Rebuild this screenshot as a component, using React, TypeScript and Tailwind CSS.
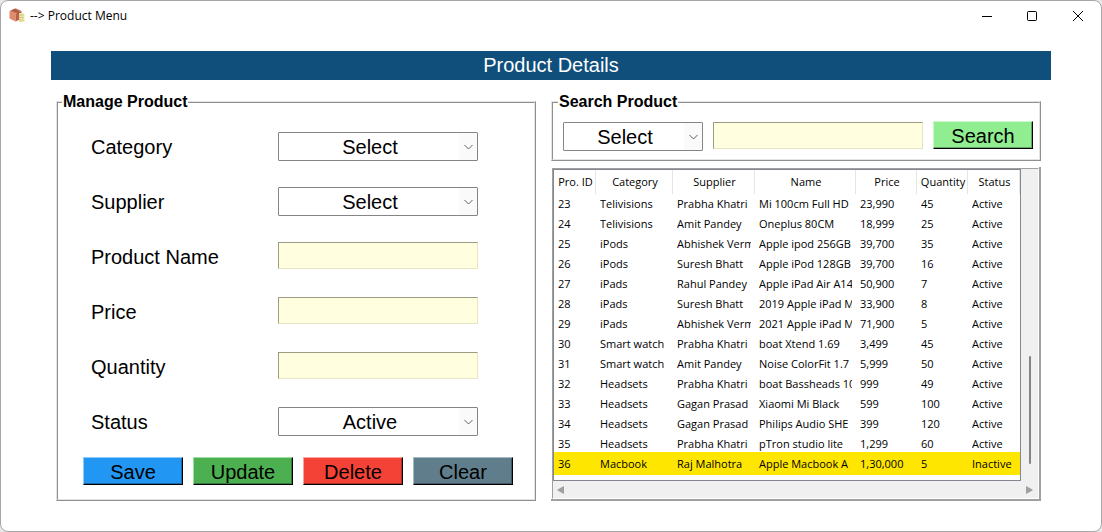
import React from "react";

const products: string[][] = [
  ["23", "Telivisions", "Prabha Khatri", "Mi 100cm Full HD", "23,990", "45", "Active"],
  ["24", "Telivisions", "Amit Pandey", "Oneplus 80CM", "18,999", "25", "Active"],
  ["25", "iPods", "Abhishek Verm", "Apple ipod 256GB", "39,700", "35", "Active"],
  ["26", "iPods", "Suresh Bhatt", "Apple iPod 128GB", "39,700", "16", "Active"],
  ["27", "iPads", "Rahul Pandey", "Apple iPad Air A14", "50,900", "7", "Active"],
  ["28", "iPads", "Suresh Bhatt", "2019 Apple iPad M", "33,900", "8", "Active"],
  ["29", "iPads", "Abhishek Verm", "2021 Apple iPad M", "71,900", "5", "Active"],
  ["30", "Smart watch", "Prabha Khatri", "boat Xtend 1.69", "3,499", "45", "Active"],
  ["31", "Smart watch", "Amit Pandey", "Noise ColorFit 1.7", "5,999", "50", "Active"],
  ["32", "Headsets", "Prabha Khatri", "boat Bassheads 10", "999", "49", "Active"],
  ["33", "Headsets", "Gagan Prasad", "Xiaomi Mi Black", "599", "100", "Active"],
  ["34", "Headsets", "Gagan Prasad", "Philips Audio SHE", "399", "120", "Active"],
  ["35", "Headsets", "Prabha Khatri", "pTron studio lite", "1,299", "60", "Active"],
  ["36", "Macbook", "Raj Malhotra", "Apple Macbook A", "1,30,000", "5", "Inactive"],
];

const columns = [
  { title: "Pro. ID", width: "w-[42px]" },
  { title: "Category", width: "w-[77px]" },
  { title: "Supplier", width: "w-[82px]" },
  { title: "Name", width: "w-[101px]" },
  { title: "Price", width: "w-[61px]" },
  { title: "Quantity", width: "w-[51px]" },
  { title: "Status", width: "w-[52px]" },
];

const selectedId = "36";

const panelClass =
  "min-w-0 border-2 border-[#e3e3e3] [border-style:ridge]";
const legendClass = "px-px text-base leading-5 font-bold";
const entryClass =
  "h-[27px] border border-t-[#9c9c84] border-l-[#9c9c84] border-r-[#e6e6c4] border-b-[#e6e6c4] bg-[#ffffe0] px-1 text-xl outline-none";
const buttonClass =
  "flex h-7 w-[100px] items-center justify-center border border-r-black border-b-black pt-0.5 text-xl leading-6";

function Combo({ id, label, options, className }: {
  id: string;
  label?: string;
  options: string[];
  className: string;
}) {
  return (
    <div className={`relative ${className}`}>
      <select
        id={id}
        aria-label={label}
        className="h-[29px] w-full appearance-none rounded-[1px] border border-[#858585] bg-white pr-4 text-center text-xl leading-6 outline-none"
      >
        {options.map((o) => (
          <option key={o}>{o}</option>
        ))}
      </select>
      <span className="pointer-events-none absolute inset-y-px right-px flex w-[18px] items-center justify-center bg-[#fafafa]">
        <svg width="10" height="6" viewBox="0 0 10 6" fill="none" stroke="#606060" aria-hidden="true">
          <path d="M1.500 1l4 4 4-4" />
        </svg>
      </span>
    </div>
  );
}

function FormRow({ id, label, children }: { id: string; label: string; children: React.ReactNode }) {
  return (
    <div className="flex h-[55px] items-start">
      <label htmlFor={id} className="w-[187px] pt-px text-xl leading-7">
        {label}
      </label>
      {children}
    </div>
  );
}

function BoxIcon() {
  return (
    <svg width="16" height="16" viewBox="0 0 16 16" aria-hidden="true">
      <path d="M0.500 3L6.500 0.300l6 2.700-6 2.800z" fill="#c06e50" />
      <path d="M0.500 3l6 2.800v7.700l-6-3z" fill="#e08a68" />
      <path d="M6.500 5.800l6-2.800v7.700l-6 2.800z" fill="#bd6045" />
      <path d="M3 2l6 2.700v1.600l1.300-.6v-1.600L4.500 1.300z" fill="#9f5440" />
      <path d="M10 5h4l1.500 1.500V14H10z" fill="#f7e49a" />
      <path d="M10.500 7h1M10.500 9.500h1M10.500 12h1" stroke="#5fa8a0" />
      <path d="M12.300 7h2.200M12.300 9.500h2.200M12.300 12h2.200" stroke="#a9cfa8" />
    </svg>
  );
}

function TitleBar() {
  return (
    <header className="flex h-[30px] items-center pl-2 font-['Open_Sans',sans-serif]">
      <BoxIcon />
      <h1 className="ml-[5px] flex-1 text-xs leading-4">--&gt; Product Menu</h1>
      <button aria-label="Minimize" className="flex h-[30px] w-11 items-center justify-center">
        <svg width="10" height="10" viewBox="0 0 10 10" stroke="#000"><path d="M0 5.500h10" /></svg>
      </button>
      <button aria-label="Maximize" className="flex h-[30px] w-[46px] items-center justify-center">
        <svg width="10" height="10" viewBox="0 0 10 10" fill="none" stroke="#000"><rect x=".5" y=".5" width="9" height="9" rx="1" /></svg>
      </button>
      <button aria-label="Close" className="flex h-[30px] w-[46px] items-center justify-center">
        <svg width="10" height="10" viewBox="0 0 10 10" stroke="#000"><path d="M0 0l10 10M10 0L0 10" /></svg>
      </button>
    </header>
  );
}

function ManagePanel() {
  return (
    <fieldset className={panelClass}>
      <legend className={`ml-1 ${legendClass}`}>Manage Product</legend>
      <div className="pt-5 pl-[33px]">
        <FormRow id="category" label="Category">
          <Combo id="category" options={["Select"]} className="w-[200px]" />
        </FormRow>
        <FormRow id="supplier" label="Supplier">
          <Combo id="supplier" options={["Select"]} className="w-[200px]" />
        </FormRow>
        <FormRow id="name" label="Product Name">
          <input id="name" type="text" className={`w-[200px] ${entryClass}`} />
        </FormRow>
        <FormRow id="price" label="Price">
          <input id="price" type="text" className={`w-[200px] ${entryClass}`} />
        </FormRow>
        <FormRow id="quantity" label="Quantity">
          <input id="quantity" type="text" className={`w-[200px] ${entryClass}`} />
        </FormRow>
        <FormRow id="status" label="Status">
          <Combo id="status" options={["Active", "Inactive"]} className="w-[200px]" />
        </FormRow>
      </div>
      <div className="-mt-[5px] flex gap-2.5 pb-3.5 pl-[25px]">
        <button className={`${buttonClass} border-t-[#8ccbfa] border-l-[#8ccbfa] bg-[#2196f3] shadow-[inset_-1px_-1px_#1769aa]`}>Save</button>
        <button className={`${buttonClass} border-t-[#9fe0a2] border-l-[#9fe0a2] bg-[#4caf50] shadow-[inset_-1px_-1px_#357a38]`}>Update</button>
        <button className={`${buttonClass} border-t-[#fba49d] border-l-[#fba49d] bg-[#f44336] shadow-[inset_-1px_-1px_#aa2e25]`}>Delete</button>
        <button className={`${buttonClass} border-t-[#a3bac5] border-l-[#a3bac5] bg-[#607d8b] shadow-[inset_-1px_-1px_#435761]`}>Clear</button>
      </div>
    </fieldset>
  );
}

function SearchPanel() {
  return (
    <fieldset className={panelClass}>
      <legend className={`ml-[5px] ${legendClass}`}>Search Product</legend>
      <div className="flex items-start gap-2.5 pt-2.5 pr-1.5 pb-2 pl-2.5">
        <Combo id="search-by" label="Search by" options={["Select"]} className="w-[140px]" />
        <input aria-label="Search text" type="text" className={`min-w-0 flex-1 ${entryClass}`} />
        <button className={`${buttonClass} -mt-px border-t-[#c8f8c8] border-l-[#c8f8c8] bg-[#90ee90] shadow-[inset_-1px_-1px_#64a664]`}>Search</button>
      </div>
    </fieldset>
  );
}

function ProductTable() {
  return (
    <div className="flex flex-1 border-r-2 border-b-2 border-[#a0a0a0] pt-px pl-px">
      <div className="grid min-w-0 flex-1 grid-cols-[1fr_17px] grid-rows-[1fr_17px] border border-t-[#a0a0a0] border-r-white border-b-white border-l-[#a0a0a0] bg-[#f0f0f0] font-['Open_Sans',sans-serif] text-[11px]">
        <div className="min-w-0 border border-[#828790] bg-white">
          <table className="w-full table-fixed border-separate border-spacing-0">
            <thead>
              <tr>
                {columns.map((c) => (
                  <th key={c.title} className={`h-6 border-r border-[#e5e5e5] p-0 font-normal ${c.width}`}>
                    <div className="mr-0.5 ml-1 flex justify-center whitespace-nowrap">{c.title}</div>
                  </th>
                ))}
              </tr>
            </thead>
            <tbody>
              {products.map((row) => (
                <tr
                  key={row[0]}
                  className={row[0] === selectedId ? "bg-[#ffe600] shadow-[0_-2px_#ffe600,0_1px_#ffe600]" : ""}
                >
                  {row.map((cell, i) => (
                    <td key={i} className="h-5 p-0">
                      <div className="mx-1 overflow-hidden leading-5 whitespace-nowrap">{cell}</div>
                    </td>
                  ))}
                </tr>
              ))}
            </tbody>
          </table>
        </div>
        <div className="flex items-end justify-center pb-[17px]" aria-hidden="true">
          <div className="h-[108px] w-0.5 rounded-full bg-[#858585]" />
        </div>
        <div className="col-span-2 flex items-center justify-between pr-[5px] pl-1" aria-hidden="true">
          <svg width="7" height="8" viewBox="0 0 7 8" fill="#a0a0a0"><path d="M7 0v8L0.500 4.500v-1z" /></svg>
          <svg width="7" height="8" viewBox="0 0 7 8" fill="#a0a0a0"><path d="M0 0v8l6.500-3.500v-1z" /></svg>
        </div>
      </div>
    </div>
  );
}

export default function App() {
  return (
    <div className="min-h-screen bg-[#e8e8e8] font-['Liberation_Sans',Arial,sans-serif] text-black">
      <div className="flex min-h-screen flex-col rounded-lg border border-[#a6a6a6] bg-white">
        <TitleBar />
        <main className="px-[50px] pt-5 pb-[30px]">
          <h2 className="bg-[#104e7c] text-center text-xl leading-[29px] text-white">Product Details</h2>
          <div className="mt-3 mr-2.5 ml-[5px] grid grid-cols-[48fr_49fr] gap-[15px]">
            <ManagePanel />
            <div className="flex min-w-0 flex-col gap-1.5">
              <SearchPanel />
              <ProductTable />
            </div>
          </div>
        </main>
      </div>
    </div>
  );
}
